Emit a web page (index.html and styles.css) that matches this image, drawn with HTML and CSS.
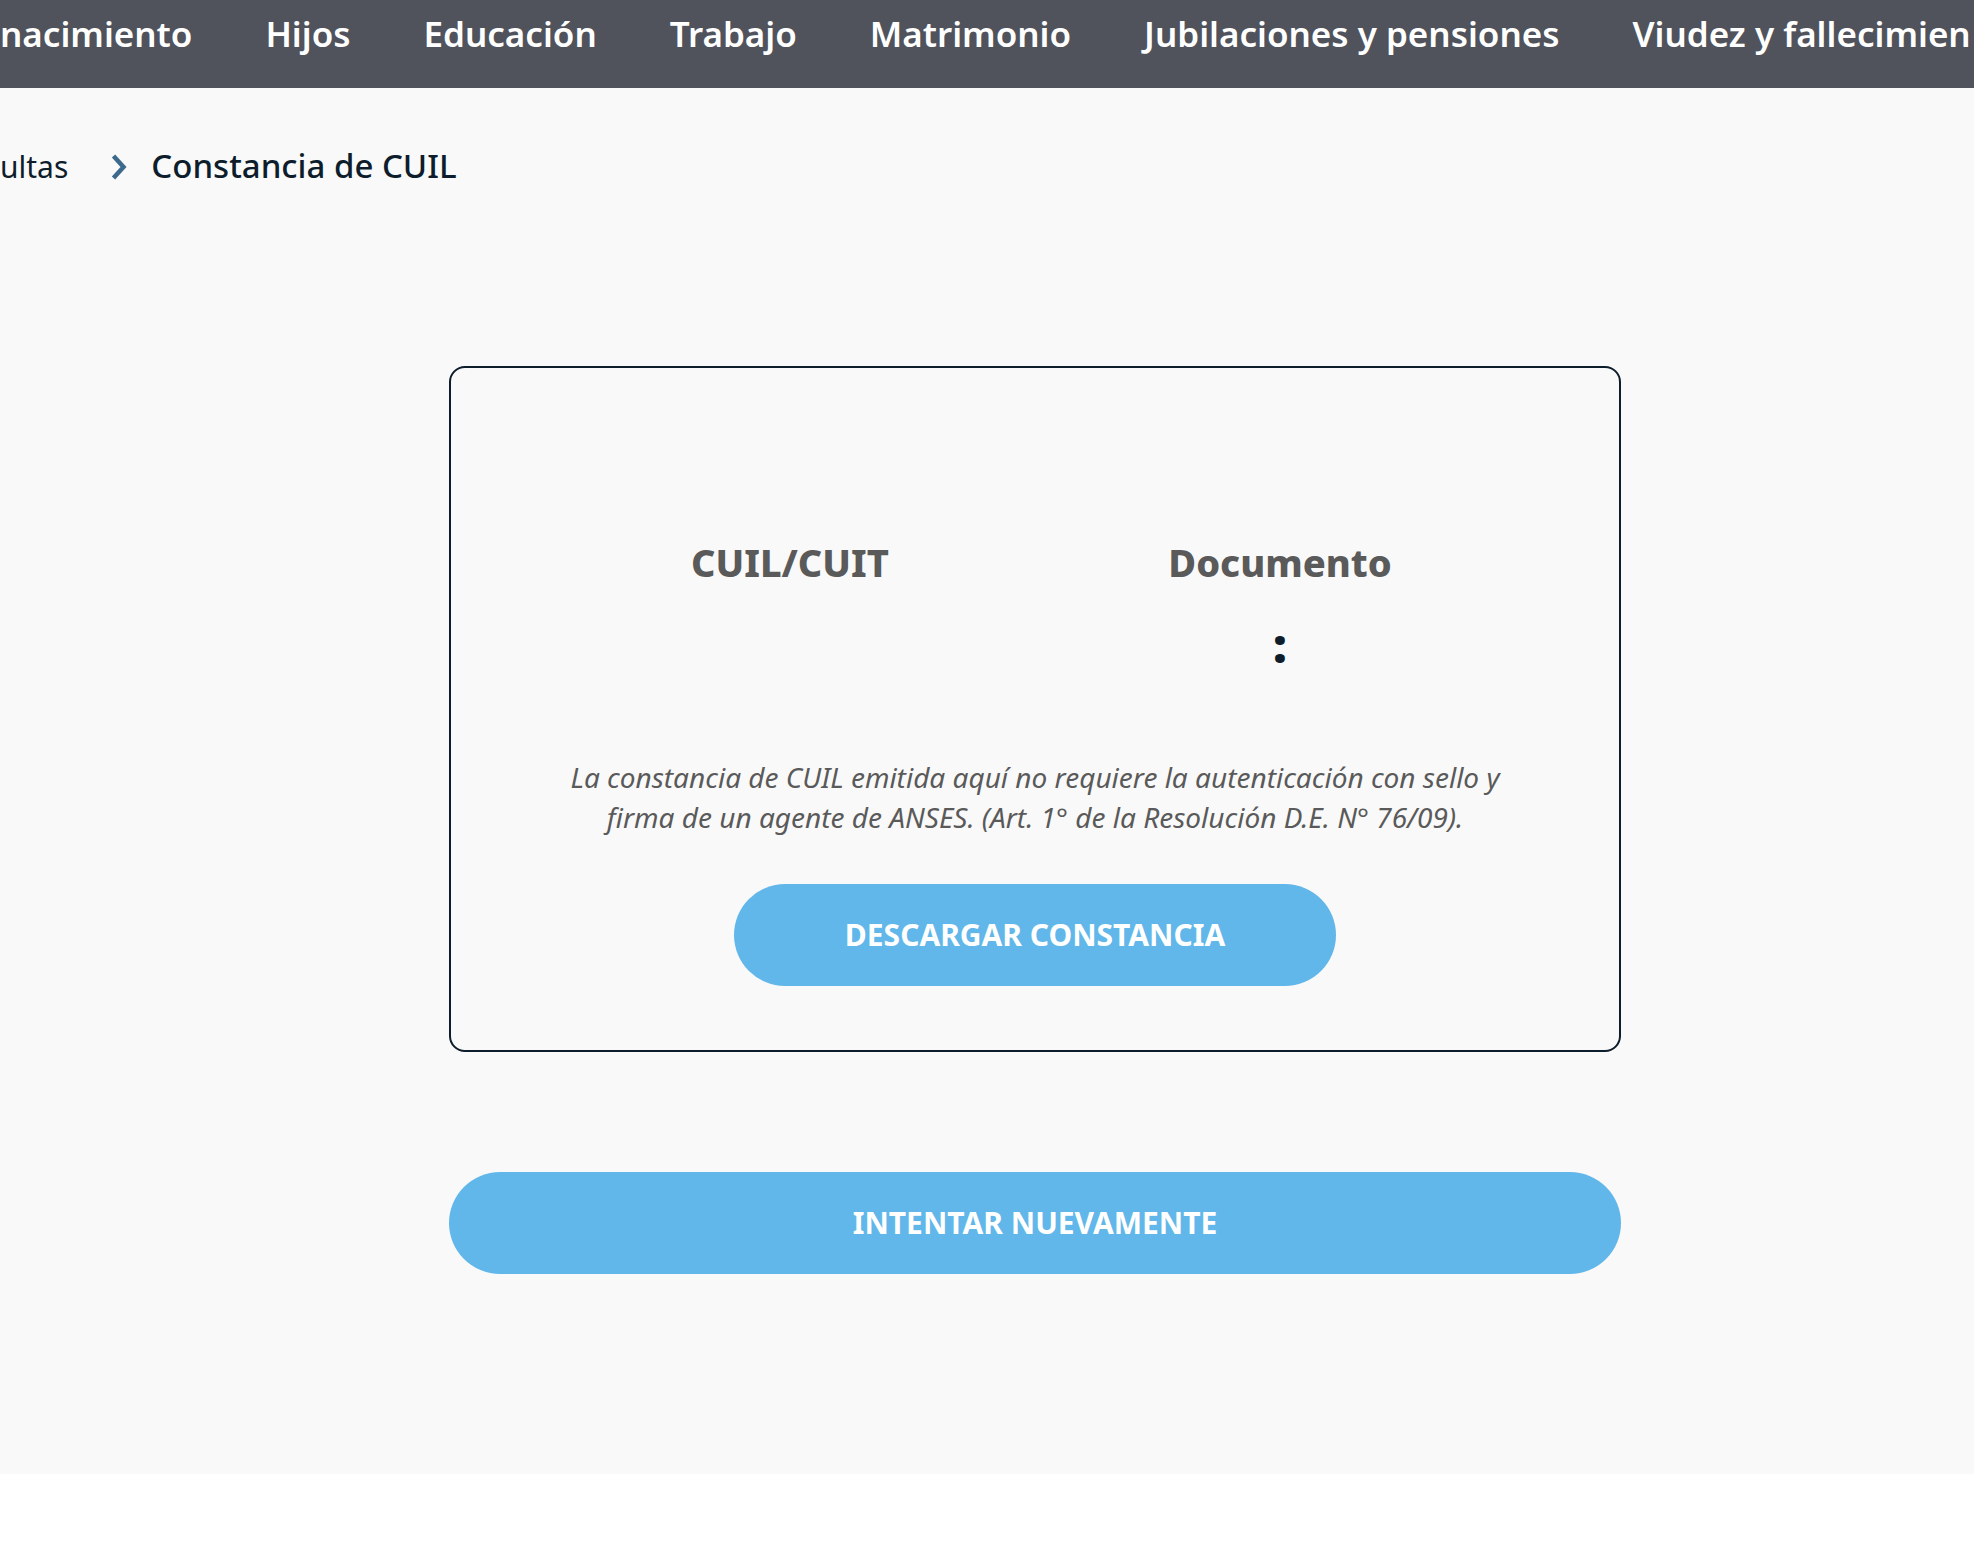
FILE: index.html
```html
<!DOCTYPE html>
<html lang="es">
<head>
  <meta charset="utf-8">
  <meta name="viewport" content="width=device-width, initial-scale=1">
  <title>Constancia de CUIL</title>
  <link rel="stylesheet" href="styles.css">
</head>
<body>
  <nav class="topics">
    <a href="#">nacimiento</a>
    <a href="#">Hijos</a>
    <a href="#">Educación</a>
    <a href="#">Trabajo</a>
    <a href="#">Matrimonio</a>
    <a href="#">Jubilaciones y pensiones</a>
    <a href="#">Viudez y fallecimien</a>
  </nav>
  <main class="page">
    <nav class="breadcrumb" aria-label="Ruta">
      <a href="#">ultas</a>
      <svg class="chevron" width="16" height="24" viewBox="0 0 16 24" aria-hidden="true">
        <path d="M1.500 2 L11.500 13 L1.500 24" fill="none" stroke="#3d6a8c" stroke-width="4.500"/>
      </svg>
      <span class="current">Constancia de CUIL</span>
    </nav>
    <div class="content">
      <section class="card">
        <dl class="facts">
          <div class="fact">
            <dt>CUIL/CUIT</dt>
            <dd></dd>
          </div>
          <div class="fact">
            <dt>Documento</dt>
            <dd>:</dd>
          </div>
        </dl>
        <p class="note">La constancia de CUIL emitida aquí no requiere la autenticación con sello y firma de un agente de ANSES. (Art. 1° de la Resolución D.E. N° 76/09).</p>
        <button class="button download" type="button">DESCARGAR CONSTANCIA</button>
      </section>
      <button class="button retry" type="button">INTENTAR NUEVAMENTE</button>
    </div>
  </main>
</body>
</html>
```
FILE: styles.css
```css
* {
  box-sizing: border-box;
}

body {
  margin: 0;
  background: #fff;
  color: #0e1d2b;
  font-family: "Noto Sans", sans-serif;
}

a {
  color: inherit;
  text-decoration: none;
}

.topics {
  display: flex;
  gap: 73px;
  padding: 0 0 20px;
  overflow: hidden;
  background: #50535c;
  color: #fff;
  font-size: 35px;
  font-weight: 600;
  line-height: 68px;
  white-space: nowrap;
}

.page {
  padding: 56px 0 200px;
  background: #f9f9f9;
}

.breadcrumb {
  display: flex;
  align-items: baseline;
  font-size: 30px;
  line-height: 44px;
}

.chevron {
  margin: 0 23px 0 44px;
  overflow: visible;
}

.current {
  font-size: 33px;
  font-weight: 500;
}

.content {
  display: flex;
  flex-direction: column;
  gap: 120px;
  max-width: 1268px;
  margin: 177px auto 0;
  padding-left: 96px;
}

.card {
  display: flex;
  flex-direction: column;
  align-items: center;
  padding: 168px 24px 64px;
  border: 2px solid #0e1d2b;
  border-radius: 16px;
}

.facts {
  display: grid;
  grid-template-columns: 1fr 1fr;
  width: 100%;
  max-width: 980px;
  margin: 0 0 80px;
  text-align: center;
}

.fact dt {
  margin-bottom: 25px;
  color: #5a5a5a;
  font-size: 38px;
  font-weight: 800;
  line-height: 52px;
}

.fact dd {
  margin: 0;
  font-size: 48px;
  font-weight: 900;
  line-height: 64px;
}

.note {
  max-width: 980px;
  margin: 0 0 47px;
  color: #5a5a5a;
  font-size: 28px;
  font-style: italic;
  line-height: 40px;
  text-align: center;
}

.button {
  padding: 29px 24px;
  border: 0;
  border-radius: 51px;
  background: #61b7e9;
  color: #fff;
  font-family: inherit;
  font-size: 30px;
  font-weight: 700;
  line-height: 44px;
  cursor: pointer;
}

.download {
  width: 100%;
  max-width: 602px;
}
```
